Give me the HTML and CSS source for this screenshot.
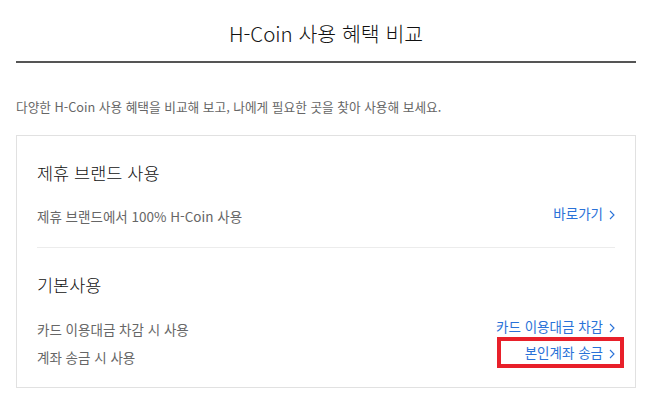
FILE: index.html
```html
<!DOCTYPE html>
<html lang="ko">
<head>
<meta charset="utf-8">
<link rel="stylesheet" href="styles.css">
</head>
<body>
<div class="page">
  <header class="head">
    <h1 class="head-title">H-Coin 사용 혜택 비교</h1>
  </header>
  <p class="desc">다양한 H-Coin 사용 혜택을 비교해 보고, 나에게 필요한 곳을 찾아 사용해 보세요.</p>
  <div class="box">
    <section class="sec sec-first">
      <h2 class="sec-title">제휴 브랜드 사용</h2>
      <div class="rows">
        <ul class="left">
          <li>제휴 브랜드에서 100% H-Coin 사용</li>
        </ul>
        <ul class="right">
          <li><a class="link">바로가기<svg class="chev" width="6" height="10" viewBox="0 0 6 10"><path d="M1 1l4 4-4 4" fill="none" stroke="currentColor" stroke-width="1.1"/></svg></a></li>
        </ul>
      </div>
    </section>
    <section class="sec sec-second">
      <h2 class="sec-title">기본사용</h2>
      <div class="rows">
        <ul class="left">
          <li>카드 이용대금 차감 시 사용</li>
          <li>계좌 송금 시 사용</li>
        </ul>
        <ul class="right">
          <li><a class="link">카드 이용대금 차감<svg class="chev" width="6" height="10" viewBox="0 0 6 10"><path d="M1 1l4 4-4 4" fill="none" stroke="currentColor" stroke-width="1.1"/></svg></a></li>
          <li class="marked"><a class="link">본인계좌 송금<svg class="chev" width="6" height="10" viewBox="0 0 6 10"><path d="M1 1l4 4-4 4" fill="none" stroke="currentColor" stroke-width="1.1"/></svg></a><span class="highlight"></span></li>
        </ul>
      </div>
    </section>
  </div>
</div>
</body>
</html>
```

FILE: styles.css
```css
* { box-sizing: border-box; }
html, body { margin: 0; padding: 0; background: #fff; }
body {
  font-family: "Noto Sans CJK KR", "Noto Sans", sans-serif;
  color: #666;
}
.page {
  width: 653px;
  padding: 0 17px 0 16px;
}
.head {
  height: 63px;
  border-bottom: 2px solid #555;
  display: flex;
  justify-content: center;
  align-items: center;
  padding-top: 4px;
}
.head-title {
  margin: 0;
  font-size: 20.5px;
  font-weight: 300;
  color: #111;
  line-height: 28px;
}
.desc {
  margin: 35px 0 0;
  font-size: 12.7px;
  line-height: 18px;
  color: #666;
}
.box {
  margin-top: 19px;
  border: 1px solid #e1e1e1;
  padding: 0 20px;
}
.sec-title {
  margin: 0;
  font-size: 17.5px;
  font-weight: 300;
  color: #111;
  line-height: 24px;
}
.sec-first {
  padding: 25px 0 22px;
  border-bottom: 1px solid #ececec;
}
.sec-first .rows { margin-top: 22px; }
.sec-first .left li { line-height: 18px; }
.sec-first .right { margin-top: -3px; }
.sec-first .right li { line-height: 18px; }
.sec-second {
  padding: 25px 0 16px;
}
.sec-second .rows { margin-top: 18px; }
.rows {
  display: flex;
  justify-content: space-between;
  align-items: flex-start;
}
ul { list-style: none; margin: 0; padding: 0; }
.left li {
  font-size: 13.5px;
  line-height: 28px;
  color: #666;
}
.right { margin-top: -2px; }
.right li {
  font-size: 13.5px;
  line-height: 26px;
  text-align: right;
}
.link {
  color: #2a72d8;
  text-decoration: none;
}
.chev {
  margin-left: 6px;
  vertical-align: -1px;
}
.marked { position: relative; }
.highlight {
  position: absolute;
  top: -2px;
  bottom: -3px;
  left: 1px;
  right: -9px;
  border: 4px solid #e8202a;
}
```
